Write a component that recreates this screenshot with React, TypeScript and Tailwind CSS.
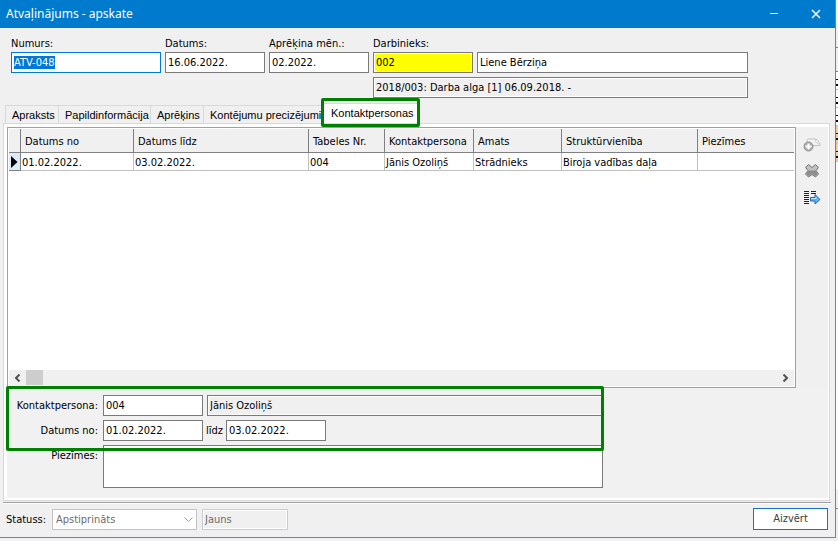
import { useEffect, useRef, type InputHTMLAttributes } from "react";
import clsx from "clsx";

const COLUMNS = [
  { title: "Datums no", width: "w-[113px]", value: "01.02.2022." },
  { title: "Datums līdz", width: "w-[175px]", value: "03.02.2022." },
  { title: "Tabeles Nr.", width: "w-[76px]", value: "004" },
  { title: "Kontaktpersona", width: "w-[89px]", value: "Jānis Ozoliņš" },
  { title: "Amats", width: "w-[88px]", value: "Strādnieks" },
  { title: "Struktūrvienība", width: "w-[136px]", value: "Biroja vadības daļa" },
  { title: "Piezīmes", width: "", value: "" },
];

const TABS = [
  { title: "Apraksts", width: "w-[53px]" },
  { title: "Papildinformācija", width: "w-[92px]" },
  { title: "Aprēķins", width: "w-[53px]" },
  { title: "Kontējumu precizējumi", width: "w-[119px]" },
];

function Field({ className, ...props }: InputHTMLAttributes<HTMLInputElement>) {
  return (
    <input
      type="text"
      className={clsx(
        "h-[21px] min-w-0 border px-[2px] outline-none shadow-[inset_0_0_0_1px_white]",
        className
      )}
      {...props}
    />
  );
}

function TitleBar() {
  return (
    <header className="flex h-7 shrink-0 items-center justify-between bg-[#007acc] pr-[14px] pl-[6px] text-white">
      <h1 className="font-['Noto_Sans',sans-serif] text-[12px] leading-4">Atvaļinājums - apskate</h1>
      <div className="flex items-center gap-8">
        <button type="button" aria-label="Minimizēt">
          <svg width="10" height="10" viewBox="0 0 10 10" className="block">
            <path d="M1 4.5h8" stroke="white" />
          </svg>
        </button>
        <button type="button" aria-label="Aizvērt logu">
          <svg width="10" height="10" viewBox="0 0 10 10" className="block">
            <path d="M1 1l8 8M9 1l-8 8" stroke="white" strokeWidth="1.5" />
          </svg>
        </button>
      </div>
    </header>
  );
}

function DocumentHeader() {
  const numberRef = useRef<HTMLInputElement>(null);

  useEffect(() => {
    numberRef.current?.focus();
    numberRef.current?.select();
  }, []);

  return (
    <section className="flex gap-1 px-[11px] pt-2 leading-4">
      <div className="flex w-[150px] flex-col">
        <label htmlFor="numurs">Numurs:</label>
        <Field
          id="numurs"
          ref={numberRef}
          defaultValue="ATV-048"
          className="border-[#0078d7] bg-white selection:bg-[#0078d7] selection:text-white"
        />
      </div>
      <div className="flex w-[100px] flex-col">
        <label htmlFor="datums">Datums:</label>
        <Field id="datums" defaultValue="16.06.2022." className="border-[#7a7a7a] bg-white" />
      </div>
      <div className="flex w-[100px] flex-col">
        <label htmlFor="menesis">Aprēķina mēn.:</label>
        <Field id="menesis" defaultValue="02.2022." className="border-[#7a7a7a] bg-white" />
      </div>
      <div className="flex w-[375px] flex-col">
        <label htmlFor="darbinieks">Darbinieks:</label>
        <div className="flex gap-1">
          <Field id="darbinieks" defaultValue="002" className="w-[100px] border-[#7a7a7a] bg-[#ffff00]" />
          <Field aria-label="Darbinieka vārds" defaultValue="Liene Bērziņa" className="flex-1 border-[#7a7a7a] bg-white" />
        </div>
        <Field
          aria-label="Līgums"
          readOnly
          defaultValue="2018/003: Darba alga [1] 06.09.2018. -"
          className="mt-1 border-[#7a7a7a] bg-[#f0f0f0]"
        />
      </div>
    </section>
  );
}

function Tabs() {
  return (
    <div role="tablist" className="flex h-[25px] items-end pl-[5px]">
      {TABS.map((tab) => (
        <button
          key={tab.title}
          type="button"
          role="tab"
          aria-selected={false}
          className={clsx(
            "h-[18px] border-t border-l border-[#d9d9d9] pl-[6px] text-left font-['Liberation_Sans',sans-serif] whitespace-nowrap",
            tab.width
          )}
        >
          {tab.title}
        </button>
      ))}
      <div className="relative">
        <button
          type="button"
          role="tab"
          aria-selected
          className="flex h-5 w-[97px] border-t border-[#d9d9d9] bg-white pt-[2px] pl-[9px] font-['Liberation_Sans',sans-serif] whitespace-nowrap"
        >
          Kontaktpersonas
        </button>
        <div className="pointer-events-none absolute -top-[5px] -right-[1px] -bottom-1 -left-[1px] z-10 rounded-xs border-3 border-[#008000] bg-transparent" />
      </div>
    </div>
  );
}

function ContactGrid() {
  return (
    <div className="flex min-h-[261px] flex-1 flex-col border border-[#a0a0a0] bg-white p-px">
      <table className="w-full table-fixed border-separate border-spacing-0 text-left">
        <thead>
          <tr className="h-6 bg-[#f0f0f0]">
            <th aria-label="Rinda" className="w-3 border-r border-b border-[#808080] p-0" />
            {COLUMNS.map((col) => (
              <th
                key={col.title}
                className={clsx(
                  "border-b border-[#808080] p-0 pt-[2px] pl-1 font-normal whitespace-nowrap not-last:border-r",
                  col.width
                )}
              >
                {col.title}
              </th>
            ))}
          </tr>
        </thead>
        <tbody>
          <tr className="h-[18px]">
            <td className="border-r border-b border-[#808080] bg-[#dbeaf7] p-0">
              <svg width="11" height="12" viewBox="0 0 11 12" className="block">
                <path d="M2 0v12l6.500-6z" fill="black" />
              </svg>
            </td>
            {COLUMNS.map((col) => (
              <td
                key={col.title}
                className="border-b border-[#c0c0c0] p-0 pt-[2px] pl-px whitespace-nowrap not-last:border-r"
              >
                {col.value}
              </td>
            ))}
          </tr>
        </tbody>
      </table>
      <div className="mt-auto flex h-4 items-center bg-[#f0f0f0]">
        <button type="button" aria-label="Pa kreisi" className="flex w-[17px] justify-center">
          <svg width="7" height="8" viewBox="0 0 7 8">
            <path d="M5.5 0.5L2 4l3.5 3.5" fill="none" stroke="#505050" strokeWidth="2" />
          </svg>
        </button>
        <div className="h-[15px] w-[17px] self-start bg-[#cdcdcd]" />
        <button type="button" aria-label="Pa labi" className="ml-auto flex w-[17px] justify-center">
          <svg width="7" height="8" viewBox="0 0 7 8">
            <path d="M1.5 0.5L5 4L1.5 7.5" fill="none" stroke="#505050" strokeWidth="2" />
          </svg>
        </button>
      </div>
    </div>
  );
}

function Toolbar() {
  return (
    <div className="flex w-8 shrink-0 flex-col items-center gap-3 bg-[#f0f0f0] pt-[11px]">
      <button type="button" aria-label="Pievienot">
        <svg width="18" height="14" viewBox="0 0 18 14" className="block">
          <path d="M4 4.500V2.500q0-1.500 1.500-1.500h7q2 0 4.500 5v1.500h-7" fill="#f4f4f4" stroke="#c0c0c0" />
          <path d="M12.500 1.500v2.500l3 2" fill="none" stroke="#d0d0d0" />
          <circle cx="5.500" cy="8.500" r="4.500" fill="#b0b0b0" stroke="#8c8c8c" />
          <path d="M5.500 5.500v6M2.500 8.500h6" stroke="white" strokeWidth="2" />
        </svg>
      </button>
      <button type="button" aria-label="Dzēst">
        <svg width="14" height="14" viewBox="0 0 14 14" className="block">
          <path
            d="M3.500 0.500L7 3.500l3.500-3 3 3-2.500 3 2.500 3.500-3 3L7 10.500l-3.500 2.500-3-3L3 6.500l-2.500-3z"
            fill="#c0c0c0"
            stroke="#707070"
          />
          <path d="M3.500 6.500h7l2 3.500-2 2L7 9.500 3.500 12l-2-2z" fill="#8c8c8c" />
        </svg>
      </button>
      <button type="button" aria-label="Aizpildīt">
        <svg width="17" height="15" viewBox="0 0 17 15" className="block">
          <path d="M0 1.500h5M7 1.500h5M0 3.500h5M7 3.500h5M0 5.500h5M0 7.500h5M0 9.500h5M0 11.500h5M0 13.500h5" stroke="#222222" />
          <path d="M6.500 7.500h4.500v-3l5 5-5 4.500v-3h-4.500z" fill="#62b4f0" stroke="#2467b0" />
          <path d="M7 8.500h5v-1.500" fill="none" stroke="#b4e2ff" />
        </svg>
      </button>
    </div>
  );
}

function ContactForm() {
  return (
    <div className="relative grid grid-cols-[91px_minmax(0,500px)] gap-x-[5px] gap-y-1 bg-[#f1f1f1] pt-[7px] pb-[10px]">
      <label htmlFor="kontaktpersona" className="self-center text-right whitespace-nowrap">
        Kontaktpersona:
      </label>
      <div className="flex gap-1">
        <Field id="kontaktpersona" defaultValue="004" className="w-[100px] border-[#7a7a7a] bg-white" />
        <Field aria-label="Kontaktpersonas vārds" readOnly defaultValue="Jānis Ozoliņš" className="flex-1 border-[#7a7a7a] bg-[#f0f0f0]" />
      </div>
      <label htmlFor="datums-no" className="self-center text-right">
        Datums no:
      </label>
      <div className="flex items-center">
        <Field id="datums-no" defaultValue="01.02.2022." className="w-[100px] border-[#7a7a7a] bg-white" />
        <label htmlFor="datums-lidz" className="w-[23px] text-center">
          līdz
        </label>
        <Field id="datums-lidz" defaultValue="03.02.2022." className="w-[100px] border-[#7a7a7a] bg-white" />
      </div>
      <label htmlFor="piezimes" className="pt-1 text-right">
        Piezīmes:
      </label>
      <textarea id="piezimes" className="block h-[43px] resize-none border border-[#7a7a7a] bg-white outline-none" />
      <div className="pointer-events-none absolute -top-[2px] -left-[1px] h-[65px] w-[598px] rounded-xs border-3 border-[#008000]" />
    </div>
  );
}

function StatusBar() {
  return (
    <footer className="mr-1 ml-[3px] flex h-[35px] shrink-0 items-start border-t border-[#a0a0a0] pt-[6px] pr-[3px] pl-[3px] shadow-[inset_0_1px_0_white]">
      <label htmlFor="statuss" className="w-[46px] self-start pt-1">
        Statuss:
      </label>
      <div className="relative">
        <select
          id="statuss"
          disabled
          className="block h-[21px] w-[145px] appearance-none border border-[#c3c3c3] bg-white pl-[3px] text-[#6d6d6d] opacity-100"
        >
          <option>Apstiprināts</option>
        </select>
        <svg width="9" height="6" viewBox="0 0 9 6" className="pointer-events-none absolute top-2 right-1">
          <path d="M0.500 0.500l4 4 4-4" fill="none" stroke="#a0a0a0" />
        </svg>
      </div>
      <Field
        aria-label="Jauns statuss"
        disabled
        defaultValue="Jauns"
        className="ml-[5px] w-[86px] border-[#cccccc] bg-[#f0f0f0] text-[#6d6d6d]"
      />
      <button
        type="button"
        className="-mt-px ml-auto h-[22px] w-[75px] border border-[#1a6fd0] bg-white text-[#404040]"
      >
        Aizvērt
      </button>
    </footer>
  );
}

const LIST_ROWS = ["bg-white", "bg-white", "bg-white", "bg-[#ffcc88]", "bg-[#ffcc88]"];

// Sliver of the document list that shows to the right of the dialog.
function ListBehind() {
  return (
    <div aria-hidden className="flex w-[2px] shrink-0 flex-col bg-[#f0f0f0]">
      <div className="h-12 border-b border-[#808080]" />
      <div className="h-6 border-b border-[#808080]" />
      {LIST_ROWS.map((color, i) => (
        <div key={i} className={clsx("flex h-[18px] flex-col justify-center border-b border-[#c0c0c0]", color)}>
          <div className="mt-1 h-px bg-black" />
          <div className="mt-1 h-[2px] bg-black" />
        </div>
      ))}
      <div className="flex-1 bg-white" />
      <div className="h-5 border-b border-[#808080]" />
      <div className="h-8" />
    </div>
  );
}

export default function App() {
  return (
    <div className="flex min-h-screen bg-[#f0f0f5] font-['DejaVu_Sans_Condensed','DejaVu_Sans',sans-serif] text-[11px] leading-[14px] text-black">
      <main className="mb-[3px] flex min-w-0 flex-1 flex-col border-r border-b border-[#808080] bg-[#f0f0f0]">
        <TitleBar />
        <DocumentHeader />
        <Tabs />
        <section className="mr-[5px] ml-[3px] mb-[1px] flex flex-1 flex-col border border-[#d9d9d9] bg-white pt-[3px] pr-px pb-[2px] pl-[3px]">
          <div className="flex flex-1">
            <ContactGrid />
            <Toolbar />
          </div>
          <ContactForm />
        </section>
        <StatusBar />
      </main>
      <ListBehind />
    </div>
  );
}
